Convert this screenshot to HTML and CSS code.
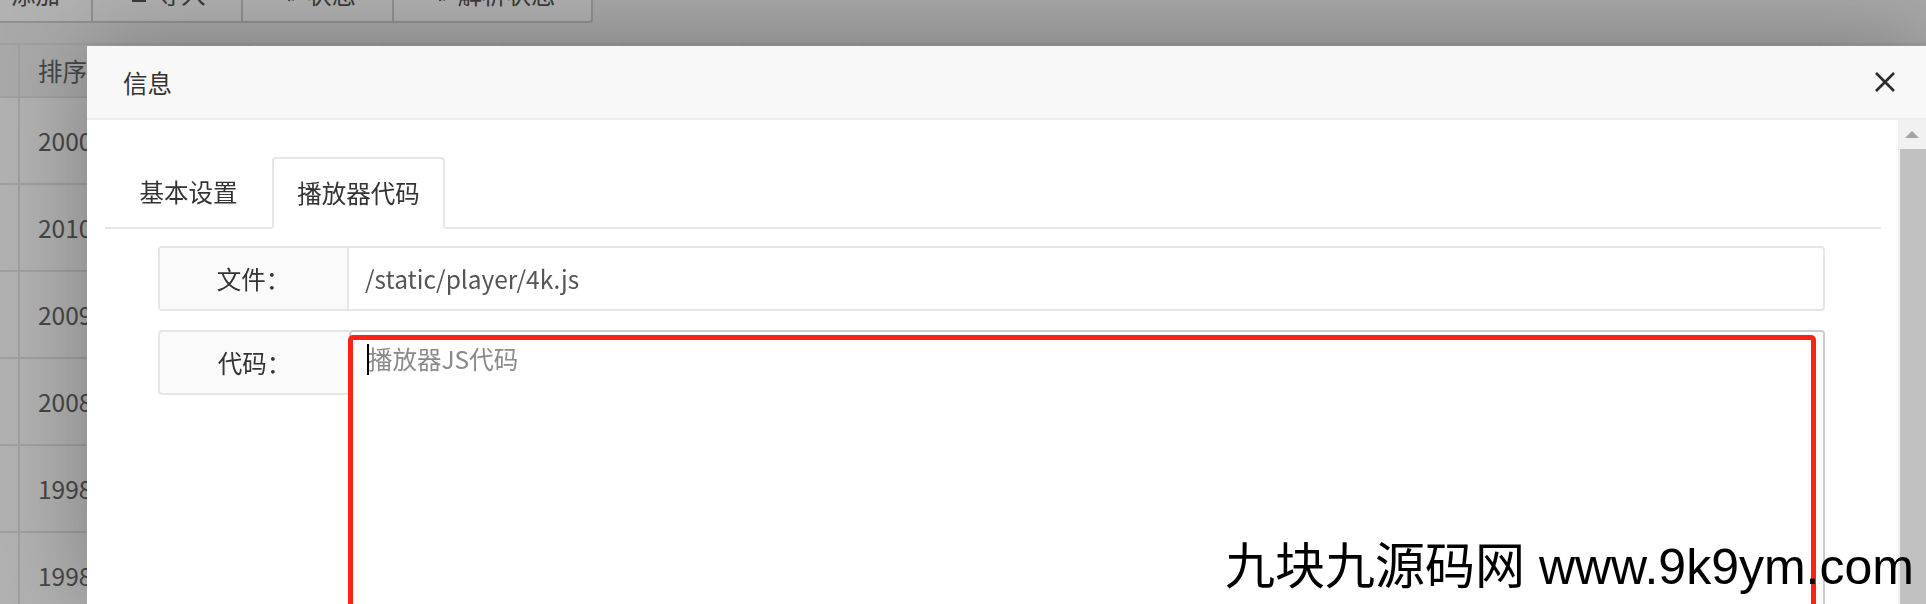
FILE: index.html
```html
<!DOCTYPE html>
<html lang="zh-CN">
<head>
<meta charset="utf-8">
<title>信息</title>
<link rel="stylesheet" href="styles.css">
</head>
<body>
<div class="page">
  <div class="toolbar">
    <button class="btn b1">添加</button>
    <button class="btn b2"><svg class="ico" viewBox="0 0 20 20" width="20" height="20"><path d="M10 2v11M5 8l5 5 5-5M3 18h14" fill="none" stroke="#555" stroke-width="2"/></svg>导入</button>
    <button class="btn b3"><svg class="ico" viewBox="0 0 20 20" width="20" height="20"><circle cx="10" cy="10" r="3" fill="none" stroke="#555" stroke-width="1.6"/><path d="M10 2.5l1.6 2.3 2.7-.7.3 2.8 2.5 1.3-1.5 2.3 1.5 2.3-2.5 1.3-.3 2.8-2.7-.7L10 17.5l-1.6-2.3-2.7.7-.3-2.8-2.5-1.3 1.5-2.3-1.5-2.3 2.5-1.3.3-2.8 2.7.7z" fill="none" stroke="#555" stroke-width="1.4"/></svg>状态</button>
    <button class="btn b4"><svg class="ico" viewBox="0 0 20 20" width="20" height="20"><circle cx="10" cy="10" r="3" fill="none" stroke="#555" stroke-width="1.6"/><path d="M10 2.5l1.6 2.3 2.7-.7.3 2.8 2.5 1.3-1.5 2.3 1.5 2.3-2.5 1.3-.3 2.8-2.7-.7L10 17.5l-1.6-2.3-2.7.7-.3-2.8-2.5-1.3 1.5-2.3-1.5-2.3 2.5-1.3.3-2.8 2.7.7z" fill="none" stroke="#555" stroke-width="1.4"/></svg>解析状态</button>
  </div>
  <div class="table">
    <div class="tr th">
      <div class="td c0"></div><div class="td c1">排序</div><div class="td c2"></div><div class="td c3"></div><div class="td c4"></div><div class="td c4"></div><div class="td c4"></div><div class="td c4"></div><div class="td c5"></div><div class="td cr"></div>
    </div>
    <div class="tr"><div class="td c0"></div><div class="td c1">2000</div><div class="td cr"></div></div>
    <div class="tr"><div class="td c0"></div><div class="td c1">2010</div><div class="td cr"></div></div>
    <div class="tr"><div class="td c0"></div><div class="td c1">2009</div><div class="td cr"></div></div>
    <div class="tr"><div class="td c0"></div><div class="td c1">2008</div><div class="td cr"></div></div>
    <div class="tr"><div class="td c0"></div><div class="td c1">1998</div><div class="td cr"></div></div>
    <div class="tr"><div class="td c0"></div><div class="td c1">1998</div><div class="td cr"></div></div>
  </div>
</div>

<div class="shade"></div>

<div class="layer">
  <div class="layer-title">
    <span>信息</span>
    <svg class="close" viewBox="0 0 22 22" width="22" height="22"><path d="M2 2L20 20M20 2L2 20" stroke="#2b2b2b" stroke-width="2.6" fill="none"/></svg>
  </div>
  <div class="layer-body">
    <div class="layer-main">
      <ul class="tab-title">
        <li class="tab">基本设置</li>
        <li class="tab this">播放器代码</li>
      </ul>
      <div class="form">
        <div class="item">
          <div class="label">文件：</div>
          <div class="input">/static/player/4k.js</div>
        </div>
        <div class="item item-text">
          <div class="label">代码：</div>
          <div class="textarea"><span class="caret"></span><span class="ph">播放器JS代码</span></div>
        </div>
      </div>
    </div>
    <div class="scrollbar">
      <div class="sb-up"><span class="sb-arrow"></span></div>
      <div class="sb-thumb"></div>
    </div>
  </div>
  <div class="mark"></div>
</div>

<div class="watermark">九块九源码网 www.9k9ym.com</div>
</body>
</html>
```
FILE: styles.css
```css
html, body {
  margin: 0;
  padding: 0;
}
body {
  width: 1926px;
  height: 604px;
  overflow: hidden;
  position: relative;
  background: #f2f2f2;
  font-family: "Noto Sans CJK SC", sans-serif;
}

/* background page */
.toolbar {
  display: flex;
  margin-top: -43px;
  margin-left: -22px;
  height: 66px;
}
.btn {
  box-sizing: border-box;
  height: 66px;
  border: 2px solid #d2d2d2;
  border-left: none;
  background: #fff;
  color: #555;
  font-family: "Noto Sans CJK SC", sans-serif;
  font-size: 24.5px;
  padding: 6px 0 0 0;
  display: flex;
  align-items: center;
  justify-content: center;
  gap: 8px;
}
.b1 { width: 115px; border-left: 2px solid #d2d2d2; }
.b2 { width: 150px; }
.b3 { width: 151px; }
.b4 { width: 199px; border-radius: 0 4px 4px 0; }
.ico { flex: none; }

.table {
  margin-top: 20px;
  border-top: 2px solid #e6e6e6;
  background: #fff;
}
.tr {
  display: flex;
  height: 85px;
  border-bottom: 2px solid #e6e6e6;
}
.th {
  height: 51px;
  background: #f2f2f2;
}
.td {
  box-sizing: border-box;
  border-right: 2px solid #e6e6e6;
  padding-left: 18px;
  display: flex;
  align-items: center;
  font-size: 24.5px;
  color: #666;
}
.c0 { width: 20px; padding: 0; }
.c1 { width: 106px; }
.c2 { width: 124px; }
.c3 { width: 133px; }
.c4 { width: 120px; }
.c5 { width: 958px; }
.cr { flex: 1; border-right: none; }

.shade {
  position: fixed;
  inset: 0;
  background: rgba(0, 0, 0, 0.3);
  z-index: 1;
}

/* dialog */
.layer {
  position: absolute;
  left: 87px;
  top: 46px;
  width: 1839px;
  height: 560px;
  background: #fff;
  box-shadow: 1px 1px 87px rgba(0, 0, 0, 0.3);
  z-index: 2;
  display: flex;
  flex-direction: column;
}
.layer-title {
  flex: none;
  height: 72px;
  background: #f8f8f8;
  border-bottom: 2px solid #eee;
  display: flex;
  align-items: center;
  justify-content: space-between;
  padding: 0 30px 0 36px;
  font-size: 24.5px;
  color: #333;
}
.close { display: block; }

.layer-body {
  flex: 1;
  display: flex;
  min-height: 0;
}
.layer-main {
  flex: 1;
  padding: 37px 17px 0 18px;
}
.tab-title {
  list-style: none;
  margin: 0;
  padding: 0;
  display: flex;
  height: 70px;
  border-bottom: 2px solid #e6e6e6;
}
.tab {
  box-sizing: border-box;
  width: 167px;
  height: 70px;
  line-height: 70px;
  text-align: center;
  font-size: 24.5px;
  color: #333;
}
.tab.this {
  width: 173px;
  height: 72px;
  line-height: 68px;
  border: 2px solid #e6e6e6;
  border-bottom-color: #fff;
  border-radius: 4px 4px 0 0;
  background: #fff;
}

.form {
  margin: 17px 56px 0 53px;
}
.item {
  display: flex;
  box-sizing: border-box;
  height: 65px;
  border: 2px solid #e6e6e6;
  border-radius: 4px;
  font-size: 24.5px;
}
.label {
  box-sizing: border-box;
  width: 189px;
  background: #fafafa;
  border-right: 2px solid #e6e6e6;
  color: #333;
  display: flex;
  align-items: center;
  justify-content: center;
}
.input {
  flex: 1;
  display: flex;
  align-items: center;
  padding-left: 16px;
  color: #555;
}
.item-text {
  margin-top: 19px;
  height: auto;
  border: none;
  align-items: flex-start;
}
.item-text .label {
  width: 191px;
  height: 65px;
  border: 2px solid #e6e6e6;
  border-right: none;
  border-radius: 4px 0 0 4px;
}
.textarea {
  flex: 1;
  box-sizing: border-box;
  height: 400px;
  border: 2px solid #cccccc;
  border-radius: 4px;
  padding: 8.5px 16px;
  line-height: 35px;
  font-size: 24.5px;
}
.caret {
  display: inline-block;
  width: 2px;
  height: 31px;
  background: #000;
  vertical-align: middle;
  margin-right: -1px;
  position: relative;
  top: -2px;
}
.ph {
  color: #8a8a8a;
}

.scrollbar {
  flex: none;
  width: 28px;
  background: #f1f1f1;
  display: flex;
  flex-direction: column;
}
.sb-up {
  height: 29px;
  display: flex;
  align-items: center;
  justify-content: center;
}
.sb-arrow {
  width: 0;
  height: 0;
  border-left: 7px solid transparent;
  border-right: 7px solid transparent;
  border-bottom: 7px solid #a3a3a3;
}
.sb-thumb {
  flex: 1;
  margin-left: 2px;
  background: #c1c1c1;
}

.mark {
  position: absolute;
  left: 261px;
  top: 289px;
  width: 1468px;
  height: 400px;
  box-sizing: border-box;
  border: 5px solid #fd2216;
  border-radius: 5px;
}

.watermark {
  position: absolute;
  left: 1225px;
  top: 542px;
  z-index: 3;
  font-family: "Liberation Sans", "Noto Sans CJK SC", sans-serif;
  font-size: 50px;
  line-height: 50px;
  color: #000;
  white-space: nowrap;
}
```
